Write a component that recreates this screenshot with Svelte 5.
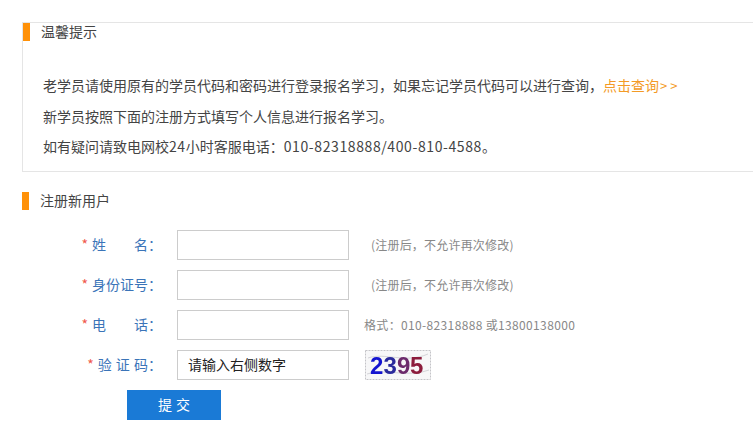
<script>
	const fields = [
		{ label: '姓　　名：', hint: '(注册后，不允许再次修改)' },
		{ label: '身份证号：', hint: '(注册后，不允许再次修改)' }
	];
</script>

<div class="page">
	<section class="notice">
		<h3 class="heading"><span class="mark"></span><span class="title">温馨提示</span></h3>
		<div class="lines">
			<p>老学员请使用原有的学员代码和密码进行登录报名学习，如果忘记学员代码可以进行查询，<a href="#top">点击查询<span class="arrows">&gt;&gt;</span></a></p>
			<p>新学员按照下面的注册方式填写个人信息进行报名学习。</p>
			<p>如有疑问请致电网校<span class="num">24</span>小时客服电话：<span class="num">010-82318888/400-810-4588</span>。</p>
		</div>
	</section>

	<h3 class="heading second"><span class="mark"></span><span class="title">注册新用户</span></h3>

	<form class="form">
		{#each fields as field}
			<div class="row">
				<label class="label"><span class="text"><i>*</i>{field.label}</span><input type="text" /></label>
				<span class="hint">{field.hint}</span>
			</div>
		{/each}
		<div class="row">
			<label class="label"><span class="text"><i>*</i>电　　话：</span><input type="text" /></label>
			<span class="hint tight">格式：010-82318888 或13800138000</span>
		</div>
		<div class="row">
			<label class="label"><span class="text spaced"><i>*</i>验 证 码：</span><input type="text" value="请输入右侧数字" /></label>
			<svg class="captcha" width="66" height="30" viewBox="0 0 66 30">
				<rect x="0.5" y="0.5" width="65" height="29" fill="#f7f7f8" stroke="#c4c4c8" stroke-dasharray="2 1" />
				<path d="M3 8 C20 2 40 14 63 4 M2 24 C18 18 44 28 64 20" fill="none" stroke="#d4d4d8" />
				<text x="5" y="24" class="digit" fill="#1414d0">2</text>
				<text x="18.5" y="24" class="digit" fill="#2a2a9c">3</text>
				<text x="32" y="24" class="digit" fill="#6c2a6c">9</text>
				<text x="45" y="24" class="digit" fill="#8c1c3c">5</text>
			</svg>
		</div>
		<button type="button">提 交</button>
	</form>
</div>

<style>
	:global(body) {
		margin: 0;
		background: #fff;
		font-family: "Noto Sans CJK SC", "Noto Sans", sans-serif;
		color: #444;
	}
	.page {
		padding: 22px 0 0 22px;
		height: 415px;
		overflow: hidden;
	}
	.notice {
		height: 148px;
		border: 1px solid #e5e5e5;
		border-right: none;
	}
	.heading {
		display: flex;
		align-items: center;
		margin: 0;
		height: 18px;
		font-size: 14px;
		font-weight: normal;
		line-height: 18px;
	}
	.title {
		margin-bottom: 2px;
	}
	.mark {
		width: 7px;
		height: 18px;
		margin-right: 11px;
		background: #ff9108;
	}
	.lines {
		padding: 29px 0 0 20px;
	}
	.lines p {
		margin: 0;
		font-size: 14px;
		line-height: 30px;
		white-space: nowrap;
	}
	.lines a {
		color: #f39a26;
		text-decoration: none;
	}
	.arrows {
		margin-left: 1px;
		font-size: 13px;
		letter-spacing: 3px;
	}
	.num {
		letter-spacing: 0.6px;
	}
	.second {
		margin-top: 20px;
	}
	.form {
		margin-top: 20px;
		display: flex;
		flex-direction: column;
		gap: 10px;
	}
	.row {
		display: flex;
		align-items: center;
		height: 30px;
	}
	.label {
		display: flex;
		align-items: center;
		justify-content: flex-end;
		width: 327px;
		font-size: 14px;
		color: #3b74b8;
		white-space: nowrap;
	}
	.text {
		margin-bottom: 2px;
	}
	.spaced {
		word-spacing: 1px;
	}
	.label i {
		margin-right: 4px;
		color: #f0584a;
		font-style: normal;
	}
	input {
		box-sizing: border-box;
		width: 172px;
		height: 30px;
		margin-left: 15px;
		padding: 0 10px 2px;
		border: 1px solid #ccc;
		font: inherit;
		font-size: 14px;
		color: #222;
		outline: none;
	}
	.hint {
		margin: 0 0 2px 22px;
		font-size: 12px;
		letter-spacing: 0.2px;
		color: #888;
		white-space: nowrap;
	}
	.hint.tight {
		margin-left: 15px;
		letter-spacing: 0.35px;
	}
	.captcha {
		margin-left: 16px;
	}
	.digit {
		font-family: "Liberation Sans", sans-serif;
		font-size: 24px;
		font-weight: bold;
		filter: blur(0.3px);
	}
	button {
		align-self: flex-start;
		width: 94px;
		height: 30px;
		margin-left: 105px;
		padding: 0 0 2px;
		border: none;
		background: #1a7ad6;
		color: #fff;
		font: inherit;
		font-size: 14px;
		word-spacing: 1px;
	}
</style>
